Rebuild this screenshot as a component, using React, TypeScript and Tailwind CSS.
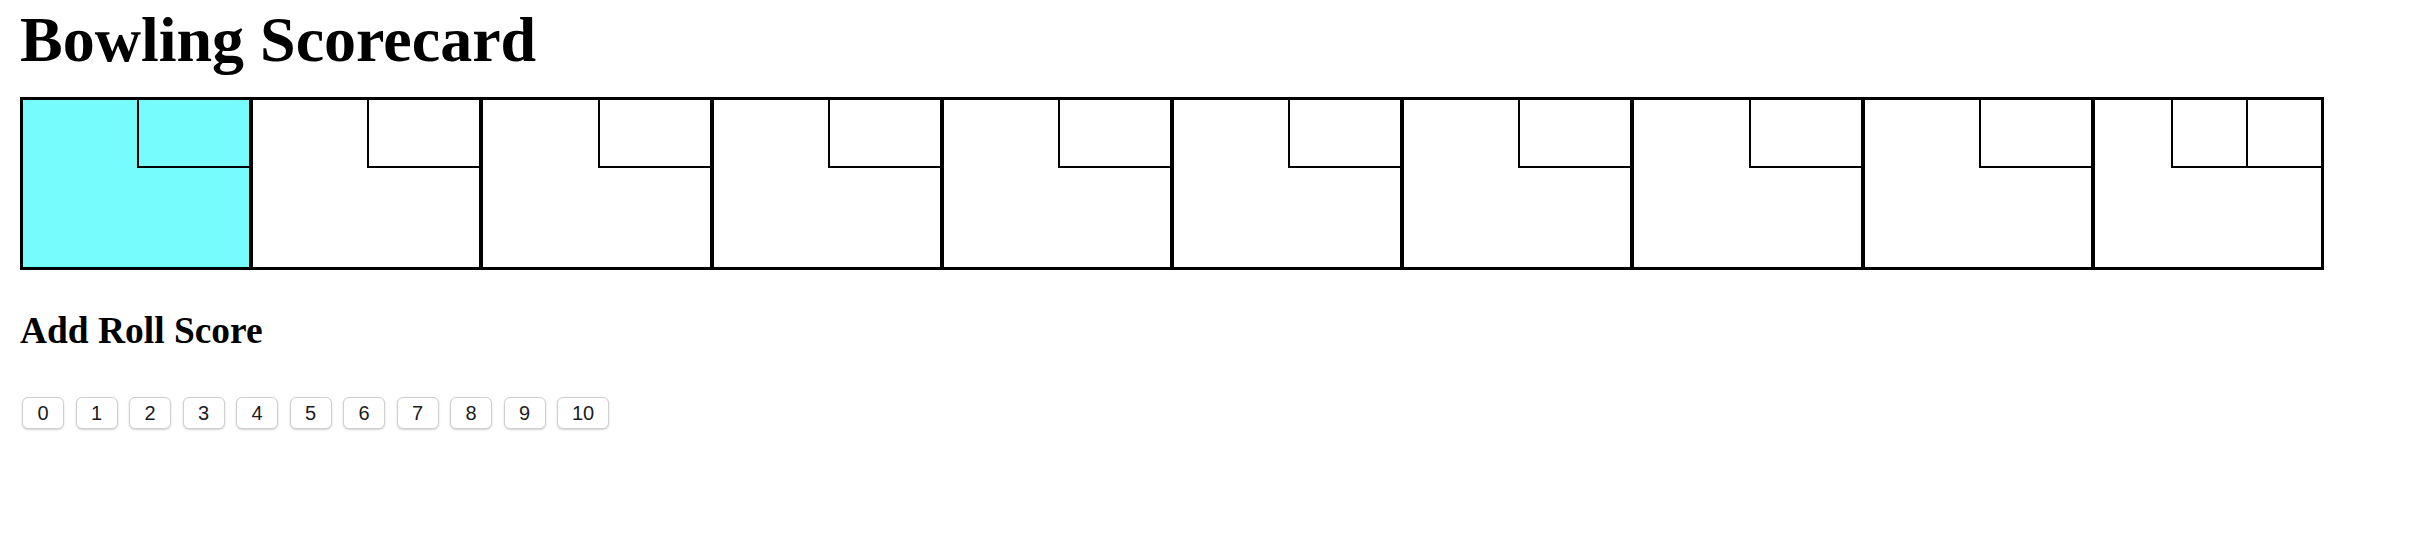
import React from "react";

const serif = { fontFamily: '"Liberation Serif", "Times New Roman", serif' };

function Frame({ index, active }: { index: number; active: boolean }) {
  const isTenth = index === 9;
  return (
    <div
      className={`flex-1 h-full border-2 border-black flex flex-col ${
        active ? "bg-[#76fcfd]" : "bg-white"
      }`}
    >
      <div className="flex justify-end">
        {isTenth ? (
          <>
            <div className="w-[75px] h-[68px] border-l-2 border-b-2 border-black" />
            <div className="w-[75px] h-[68px] border-l-2 border-b-2 border-black" />
          </>
        ) : (
          <div className="w-[112px] h-[68px] border-l-2 border-b-2 border-black" />
        )}
      </div>
    </div>
  );
}

export default function App() {
  const rolls = [0, 1, 2, 3, 4, 5, 6, 7, 8, 9, 10];
  return (
    <div className="min-h-[556px] bg-white text-black px-[20px] pt-[3px]">
      <h1
        className="text-[64px] leading-[74px] font-bold m-0"
        style={serif}
      >
        Bowling Scorecard
      </h1>
      <div className="mt-[20px] w-[2304px] h-[173px] border border-black flex">
        {Array.from({ length: 10 }).map((_, i) => (
          <Frame key={i} index={i} active={i === 0} />
        ))}
      </div>
      <h3
        className="mt-[39px] text-[37.44px] leading-[43px] font-bold"
        style={serif}
      >
        Add Roll Score
      </h3>
      <div className="mt-[45px] flex gap-[11.5px] pl-[2px]">
        {rolls.map((r) => (
          <button
            key={r}
            className={`${
              r === 10 ? "w-[52px]" : "w-[42px]"
            } h-[32px] bg-white border border-[#cfcfcf] rounded-[6px] shadow-[0_1px_2px_rgba(0,0,0,0.18)] text-[20px] leading-none text-[#1c1c1c] flex items-center justify-center`}
            style={{ fontFamily: '"Liberation Sans", Arial, sans-serif' }}
          >
            {r}
          </button>
        ))}
      </div>
    </div>
  );
}
